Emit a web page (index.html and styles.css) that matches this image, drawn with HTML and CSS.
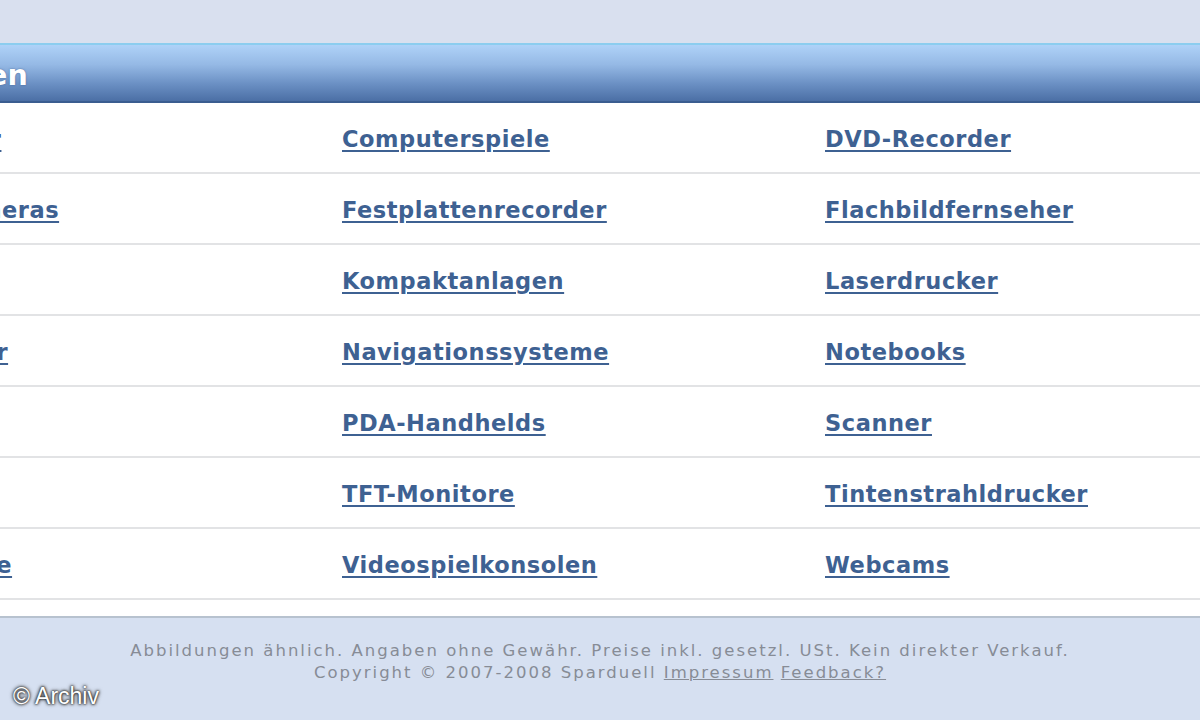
FILE: index.html
```html
<!DOCTYPE html>
<html lang="de">
<head>
<meta charset="utf-8">
<title>Kategorien</title>
<link rel="stylesheet" href="styles.css">
</head>
<body>
<div class="page">
  <div class="top"></div>
  <section class="panel">
    <header class="panel-head"><h1 class="panel-title">Kategorien</h1></header>
    <div class="grid">
      <div class="cell"><a href="#">Camcorder</a></div>
      <div class="cell"><a href="#">Computerspiele</a></div>
      <div class="cell"><a href="#">DVD-Recorder</a></div>
      <div class="cell"><a href="#">Digitalkameras</a></div>
      <div class="cell"><a href="#">Festplattenrecorder</a></div>
      <div class="cell"><a href="#">Flachbildfernseher</a></div>
      <div class="cell"><a href="#">Handys</a></div>
      <div class="cell"><a href="#">Kompaktanlagen</a></div>
      <div class="cell"><a href="#">Laserdrucker</a></div>
      <div class="cell"><a href="#">MP3-Player</a></div>
      <div class="cell"><a href="#">Navigationssysteme</a></div>
      <div class="cell"><a href="#">Notebooks</a></div>
      <div class="cell"><a href="#">Objektive</a></div>
      <div class="cell"><a href="#">PDA-Handhelds</a></div>
      <div class="cell"><a href="#">Scanner</a></div>
      <div class="cell"><a href="#">Speicher</a></div>
      <div class="cell"><a href="#">TFT-Monitore</a></div>
      <div class="cell"><a href="#">Tintenstrahldrucker</a></div>
      <div class="cell"><a href="#">Videospiele</a></div>
      <div class="cell"><a href="#">Videospielkonsolen</a></div>
      <div class="cell"><a href="#">Webcams</a></div>
    </div>
    <div class="panel-foot"></div>
  </section>
  <footer class="footer">
    <p class="foot-line">Abbildungen ähnlich. Angaben ohne Gewähr. Preise inkl. gesetzl. USt. Kein direkter Verkauf.</p>
    <p class="foot-line">Copyright © 2007-2008 Sparduell <a href="#">Impressum</a> <a href="#">Feedback?</a></p>
  </footer>
  <div class="watermark">© Archiv</div>
</div>
</body>
</html>
```

FILE: styles.css
```css
html, body {
  margin: 0;
  padding: 0;
}
body {
  width: 1200px;
  height: 720px;
  overflow: hidden;
  background: #d6e0f1;
  font-family: "DejaVu Sans", Verdana, sans-serif;
}
.page {
  position: relative;
  width: 1200px;
  height: 720px;
  overflow: hidden;
}
.top {
  height: 43px;
  background: #d9e0ef;
}
.panel {
  background: #ffffff;
}
.panel-head {
  height: 56px;
  border-top: 2px solid #8ccdef;
  border-bottom: 2px solid #3a5d90;
  background: linear-gradient(to bottom, #afd2f8 0%, #95b9e5 35%, #6a8fc3 70%, #4b6fa5 100%);
  display: flex;
  align-items: center;
  overflow: hidden;
}
.panel-title {
  margin: 4px 0 0 -150px;
  font-size: 28.5px;
  font-weight: bold;
  color: #ffffff;
  text-shadow: 0 0 2px rgba(40, 70, 120, 0.6);
  white-space: nowrap;
}
.grid {
  display: grid;
  grid-template-columns: 483px 483px 375px;
  margin-left: -141px;
}
.cell {
  box-sizing: border-box;
  height: 71px;
  padding-top: 3px;
  border-bottom: 2px solid #e2e3e5;
  display: flex;
  align-items: center;
  white-space: nowrap;
}
.cell a {
  font-size: 22.5px;
  letter-spacing: 0.55px;
  font-weight: bold;
  color: #3e6192;
  text-decoration: underline;
  text-decoration-thickness: 2px;
  text-underline-offset: 3px;
}
.panel-foot {
  height: 16px;
  border-bottom: 2px solid #b7c2cf;
}
.footer {
  padding-top: 22px;
  text-align: center;
  color: #878c96;
  font-size: 16.5px;
  letter-spacing: 2px;
  line-height: 22px;
}
.foot-line {
  margin: 0;
}
.footer a {
  color: #878c96;
  text-decoration: underline;
}
.watermark {
  position: absolute;
  left: 13px;
  top: 683px;
  font-family: "Liberation Sans", Arial, sans-serif;
  font-size: 23px;
  color: #ffffff;
  text-shadow: 0 0 2px #222, 0 0 3px #333, 0 0 4px #444;
}
```
